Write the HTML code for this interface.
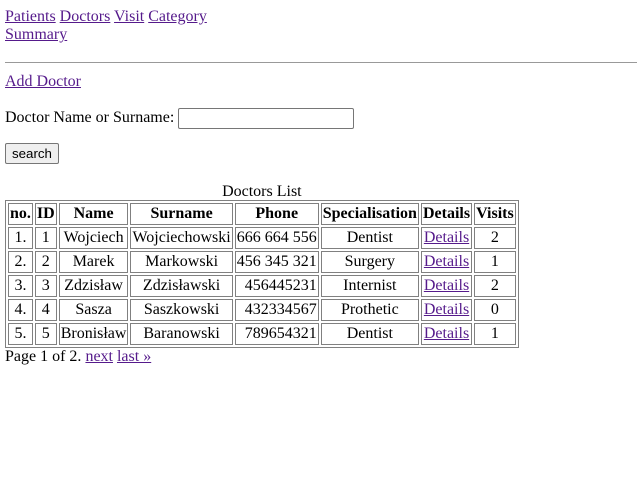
<!DOCTYPE html>
<html><head><meta charset="utf-8"><style>
body{margin:8px 1px 8px 5px;font-family:"Liberation Serif",serif;font-size:16px;color:#000;background:#fff}
a{color:#551A8B}
.nav{width:210px;line-height:18px}
hr{margin:18px 0 10px 0;border:0;border-top:1px solid #999;height:0}
p{margin:17px 0 14px}
input[type=text]{width:170px;height:17px;border:1px solid #767676;border-radius:2px;padding:1px 2px;vertical-align:middle}
button{font-family:"Liberation Sans",sans-serif;font-size:13.3px;padding:1px 6px;border:1px solid #767676;border-radius:2px;background:#efefef;height:21px}
table{border:1px solid #808080;border-spacing:2px;margin-top:19px}
caption{line-height:17px;padding-bottom:0}
td,th{border:1px solid #808080;padding:1px;text-align:center;line-height:18px}
td.r{text-align:right}
</style></head><body>
<div class="nav"><a href="#">Patients</a> <a href="#">Doctors</a> <a href="#">Visit</a> <a href="#">Category</a> <a href="#">Summary</a></div>
<hr>
<a href="#">Add Doctor</a>
<p>Doctor Name or Surname: <input type="text"></p>
<button>search</button>
<table>
<caption>Doctors List</caption>
<tr><th>no.</th><th>ID</th><th>Name</th><th>Surname</th><th>Phone</th><th>Specialisation</th><th>Details</th><th>Visits</th></tr>
<tr><td>1.</td><td>1</td><td>Wojciech</td><td>Wojciechowski</td><td class="r">666 664 556</td><td>Dentist</td><td><a href="#">Details</a></td><td>2</td></tr>
<tr><td>2.</td><td>2</td><td>Marek</td><td>Markowski</td><td class="r">456 345 321</td><td>Surgery</td><td><a href="#">Details</a></td><td>1</td></tr>
<tr><td>3.</td><td>3</td><td>Zdzisław</td><td>Zdzisławski</td><td class="r">456445231</td><td>Internist</td><td><a href="#">Details</a></td><td>2</td></tr>
<tr><td>4.</td><td>4</td><td>Sasza</td><td>Saszkowski</td><td class="r">432334567</td><td>Prothetic</td><td><a href="#">Details</a></td><td>0</td></tr>
<tr><td>5.</td><td>5</td><td>Bronisław</td><td>Baranowski</td><td class="r">789654321</td><td>Dentist</td><td><a href="#">Details</a></td><td>1</td></tr>
</table>
<div>Page 1 of 2. <a href="#">next</a> <a href="#">last »</a></div>
</body></html>
